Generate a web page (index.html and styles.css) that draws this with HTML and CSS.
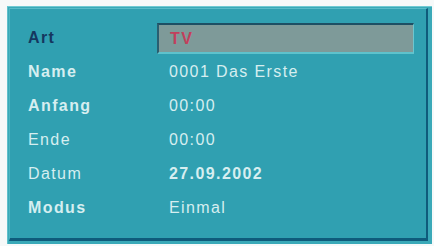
FILE: index.html
```html
<!DOCTYPE html>
<html>
<head>
<meta charset="utf-8">
<link rel="stylesheet" href="styles.css">
</head>
<body>
<div class="frame">
  <div class="panel">
    <div class="grid">
      <div class="label label-active">Art</div>
      <div class="value value-field"><div class="field">TV</div></div>
      <div class="label bold">Name</div>
      <div class="value">0001 Das Erste</div>
      <div class="label bold">Anfang</div>
      <div class="value">00:00</div>
      <div class="label">Ende</div>
      <div class="value">00:00</div>
      <div class="label">Datum</div>
      <div class="value bold">27.09.2002</div>
      <div class="label bold">Modus</div>
      <div class="value">Einmal</div>
    </div>
  </div>
</div>
</body>
</html>
```
FILE: styles.css
```css
html, body {
  margin: 0;
  padding: 0;
  background: #f6f9f9;
  width: 434px;
  height: 246px;
  overflow: hidden;
}
.frame {
  margin: 6px 0 0 7px;
  width: 425px;
  height: 238px;
  box-sizing: border-box;
  background: #3aa9b8;
  border-top: 1px solid #6fcad3;
  border-left: 1px solid #5fc0cb;
  padding: 1px 4px 3px 1px;
}
.panel {
  width: 100%;
  height: 100%;
  box-sizing: border-box;
  background: #30a0b1;
  border-top: 1px solid #58bcc8;
  border-left: 1px solid #4ab4c1;
  border-right: 2px solid #0f5b7b;
  border-bottom: 3px solid #0f5b7b;
  padding: 12px 0 0 17px;
}
.grid {
  display: grid;
  grid-template-columns: 130px 257px;
  grid-auto-rows: 34px;
  align-items: center;
  font-family: "Liberation Sans", Arial, sans-serif;
  font-size: 16px;
  letter-spacing: 1.4px;
  color: #d6eef0;
}
.label {
  padding-left: 1px;
}
.bold {
  font-weight: bold;
}
.label-active {
  color: #15375f;
  font-weight: bold;
}
.value {
  padding-left: 12px;
}
.value-field {
  padding-left: 0;
}
.field {
  height: 31px;
  box-sizing: border-box;
  background: #7e9a99;
  border-top: 2px solid #1d4f64;
  border-left: 2px solid #2a5e70;
  border-bottom: 2px solid #5ec2cc;
  border-right: 1px solid #6cc6cf;
  color: #c23f5c;
  font-weight: bold;
  padding-left: 11px;
  line-height: 27px;
}
```
